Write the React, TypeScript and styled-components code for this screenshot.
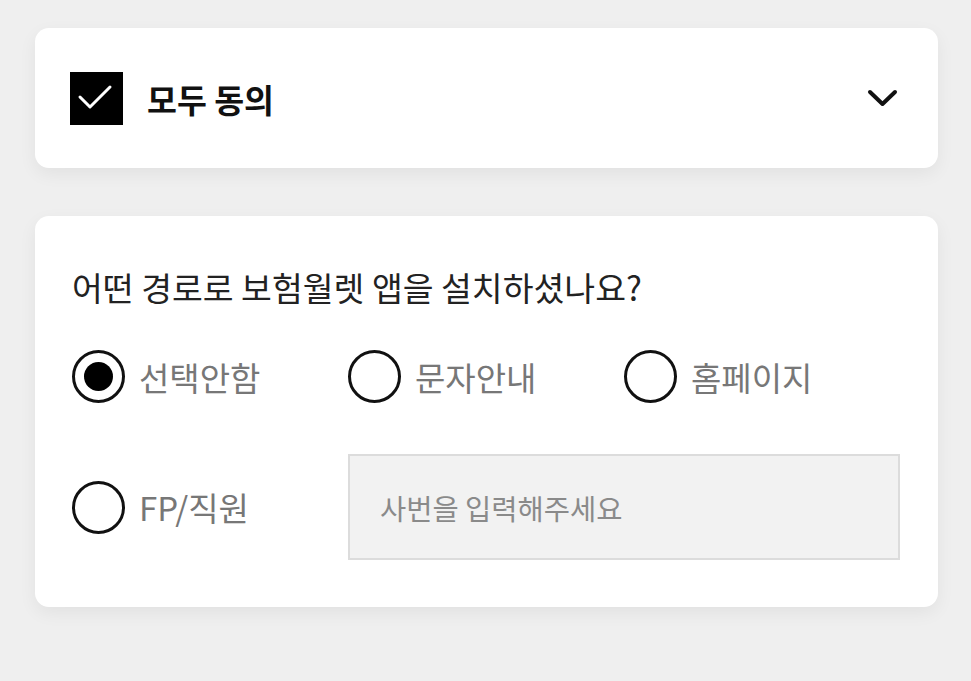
import React, { useState } from "react";
import styled, { createGlobalStyle, css } from "styled-components";

const GlobalStyle = createGlobalStyle`
  html, body {
    margin: 0;
    padding: 0;
    background: #efefef;
  }
  body {
    font-family: "Noto Sans CJK KR", "Noto Sans", sans-serif;
    color: #222;
  }
`;

const Page = styled.div`
  display: flex;
  flex-direction: column;
  gap: 48px;
  padding: 28px 33px 0 35px;
  min-height: 681px;
  box-sizing: border-box;
`;

const Card = styled.div`
  background: #fff;
  border-radius: 14px;
  box-shadow: 0 6px 18px rgba(0, 0, 0, 0.06);
`;

const AgreeHeader = styled(Card)`
  height: 140px;
  display: flex;
  align-items: center;
  padding: 0 40px 0 35px;
  box-sizing: border-box;
`;

const CheckBox = styled.div`
  width: 53px;
  height: 53px;
  background: #000;
  display: flex;
  align-items: center;
  justify-content: center;
  flex-shrink: 0;
`;

const AgreeLabel = styled.span`
  margin-left: 24px;
  font-size: 32.5px;
  font-weight: 700;
  color: #111;
  flex: 1;
`;

const ChevronButton = styled.button`
  border: 0;
  background: none;
  padding: 0;
  display: flex;
  cursor: pointer;
`;

const SurveyCard = styled(Card)`
  padding: 52px 38px 47px 37px;
`;

const Question = styled.div`
  font-size: 33.5px;
  line-height: 38px;
  color: #222;
`;

const OptionGrid = styled.div`
  margin-top: 44px;
  display: grid;
  grid-template-columns: repeat(3, 1fr);
  grid-template-rows: 53px 106px;
  row-gap: 51px;
  align-items: center;
`;

const RadioItem = styled.label`
  display: flex;
  align-items: center;
  gap: 14px;
  cursor: pointer;
`;

const RadioCircle = styled.span<{ checked: boolean }>`
  width: 53px;
  height: 53px;
  box-sizing: border-box;
  border: 3px solid #111;
  border-radius: 50%;
  display: flex;
  align-items: center;
  justify-content: center;
  flex-shrink: 0;

  ${(props) =>
    props.checked &&
    css`
      &::after {
        content: "";
        width: 29px;
        height: 29px;
        border-radius: 50%;
        background: #000;
      }
    `}
`;

const RadioText = styled.span`
  font-size: 33px;
  color: #777;
`;

const EmployeeInput = styled.input`
  grid-column: 2 / 4;
  height: 106px;
  box-sizing: border-box;
  border: 2px solid #dcdcdc;
  background: #f2f2f2;
  padding: 0 30px;
  font-family: inherit;
  font-size: 28.5px;
  color: #333;
  outline: none;

  &::placeholder {
    color: #8a8a8a;
  }
`;

const CheckIcon = () => (
  <svg width="53" height="53" viewBox="0 0 53 53">
    <polyline
      points="10,25 20,35 40,15"
      fill="none"
      stroke="#fff"
      strokeWidth="3"
      strokeLinecap="round"
      strokeLinejoin="round"
    />
  </svg>
);

const ChevronIcon = () => (
  <svg width="31" height="20" viewBox="0 0 31 20">
    <polyline
      points="3,4 15.5,16 28,4"
      fill="none"
      stroke="#111"
      strokeWidth="4"
      strokeLinecap="round"
      strokeLinejoin="round"
    />
  </svg>
);

const options = ["선택안함", "문자안내", "홈페이지", "FP/직원"];

export default function App() {
  const [selected, setSelected] = useState("선택안함");

  return (
    <>
      <GlobalStyle />
      <Page>
        <AgreeHeader>
          <CheckBox>
            <CheckIcon />
          </CheckBox>
          <AgreeLabel>모두 동의</AgreeLabel>
          <ChevronButton>
            <ChevronIcon />
          </ChevronButton>
        </AgreeHeader>

        <SurveyCard>
          <Question>어떤 경로로 보험월렛 앱을 설치하셨나요?</Question>
          <OptionGrid>
            {options.map((option) => (
              <RadioItem key={option} onClick={() => setSelected(option)}>
                <RadioCircle checked={selected === option} />
                <RadioText>{option}</RadioText>
              </RadioItem>
            ))}
            <EmployeeInput placeholder="사번을 입력해주세요" />
          </OptionGrid>
        </SurveyCard>
      </Page>
    </>
  );
}
